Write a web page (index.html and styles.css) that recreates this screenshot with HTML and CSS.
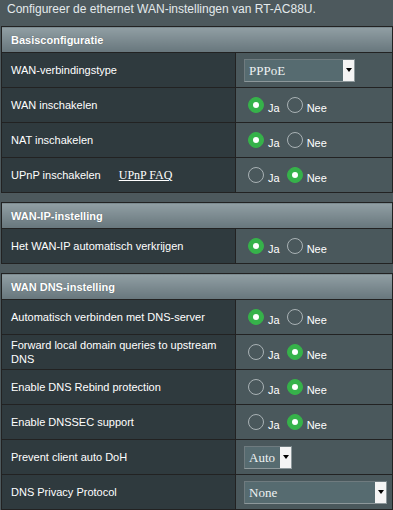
FILE: index.html
```html
<!DOCTYPE html>
<html lang="nl">
<head>
<meta charset="utf-8">
<title>WAN</title>
<link rel="stylesheet" href="styles.css">
</head>
<body>
<div class="page">
  <div class="intro">Configureer de ethernet WAN-instellingen van RT-AC88U.</div>

  <table class="form">
    <thead><tr><td colspan="2">Basisconfiguratie</td></tr></thead>
    <tbody>
      <tr><th>WAN-verbindingstype</th>
        <td><div class="sel sel-type"><span class="sel-val">PPPoE</span><span class="sel-arrow"></span></div></td></tr>
      <tr><th>WAN inschakelen</th>
        <td><div class="radios"><span class="radio on"></span><span class="rlabel">Ja</span><span class="radio"></span><span class="rlabel">Nee</span></div></td></tr>
      <tr><th>NAT inschakelen</th>
        <td><div class="radios"><span class="radio on"></span><span class="rlabel">Ja</span><span class="radio"></span><span class="rlabel">Nee</span></div></td></tr>
      <tr><th>UPnP inschakelen <a class="faq" href="#">UPnP FAQ</a></th>
        <td><div class="radios"><span class="radio"></span><span class="rlabel">Ja</span><span class="radio on"></span><span class="rlabel">Nee</span></div></td></tr>
    </tbody>
  </table>

  <table class="form">
    <thead><tr><td colspan="2">WAN-IP-instelling</td></tr></thead>
    <tbody>
      <tr><th>Het WAN-IP automatisch verkrijgen</th>
        <td><div class="radios"><span class="radio on"></span><span class="rlabel">Ja</span><span class="radio"></span><span class="rlabel">Nee</span></div></td></tr>
    </tbody>
  </table>

  <table class="form">
    <thead><tr><td colspan="2">WAN DNS-instelling</td></tr></thead>
    <tbody>
      <tr><th>Automatisch verbinden met DNS-server</th>
        <td><div class="radios"><span class="radio on"></span><span class="rlabel">Ja</span><span class="radio"></span><span class="rlabel">Nee</span></div></td></tr>
      <tr><th>Forward local domain queries to upstream DNS</th>
        <td><div class="radios"><span class="radio"></span><span class="rlabel">Ja</span><span class="radio on"></span><span class="rlabel">Nee</span></div></td></tr>
      <tr><th>Enable DNS Rebind protection</th>
        <td><div class="radios"><span class="radio"></span><span class="rlabel">Ja</span><span class="radio on"></span><span class="rlabel">Nee</span></div></td></tr>
      <tr><th>Enable DNSSEC support</th>
        <td><div class="radios"><span class="radio"></span><span class="rlabel">Ja</span><span class="radio on"></span><span class="rlabel">Nee</span></div></td></tr>
      <tr><th>Prevent client auto DoH</th>
        <td><div class="sel sel-auto"><span class="sel-val">Auto</span><span class="sel-arrow"></span></div></td></tr>
      <tr><th>DNS Privacy Protocol</th>
        <td><div class="sel sel-none"><span class="sel-val">None</span><span class="sel-arrow"></span></div></td></tr>
    </tbody>
  </table>
</div>
</body>
</html>
```
FILE: styles.css
```css
* { box-sizing: border-box; }
html, body { margin: 0; padding: 0; background: #4d595d; }
body {
  font-family: "Liberation Sans", Arial, sans-serif;
  font-size: 11px;
  color: #ffffff;
  width: 393px;
  height: 510px;
  overflow: hidden;
}
.page { padding-left: 1px; }
.intro {
  height: 26px;
  padding: 2px 0 0 6px;
  font-size: 12px;
  line-height: 14px;
  color: #e4eaec;
}
.form {
  border-collapse: collapse;
  width: 392px;
  border: 1px solid #222;
  margin-bottom: 9px;
}
.form thead td {
  height: 26px;
  padding: 0 0 0 9px;
  background: linear-gradient(#919fa4, #67767c);
  font-weight: bold;
  border-bottom: 1px solid #222;
  text-shadow: 0 0 1px rgba(40, 50, 55, 0.5);
}
.form th {
  width: 234px;
  height: 35px;
  padding: 0 10px 0 9px;
  background: #2f3a3e;
  text-align: left;
  font-weight: normal;
  line-height: 14px;
  border: 1px solid #222;
}
.form td {
  background: #4a585c;
  padding: 0 0 0 8px;
  border: 1px solid #222;
}
.faq {
  font-family: "Liberation Serif", "Times New Roman", serif;
  font-size: 12px;
  color: #ffffff;
  text-decoration: underline;
  margin-left: 15px;
}
.radios { display: flex; align-items: center; }
.radio {
  width: 16px;
  height: 16px;
  border-radius: 50%;
  border: 1px solid #a9b2b5;
  margin-left: 4px;
  display: flex;
  align-items: center;
  justify-content: center;
}
.radio.on { background: #36b24a; border-color: #36b24a; }
.radio.on::after {
  content: "";
  width: 6px;
  height: 6px;
  border-radius: 50%;
  background: #ffffff;
}
.rlabel { margin: 6px 3px 0 4px; }
.sel {
  display: flex;
  height: 23px;
  border: 1px solid #8d989b;
  border-top-color: #6f7b7f;
  border-left-color: #6f7b7f;
  background: #566b70;
  font-family: "Liberation Serif", "Times New Roman", serif;
  font-size: 13px;
  color: #eef2f3;
}
.sel-val { flex: 1; padding: 3px 0 0 4px; }
.sel-arrow {
  width: 11px;
  background: #f4f4f4;
  display: flex;
  align-items: center;
  justify-content: center;
}
.sel-arrow::after {
  content: "";
  border-left: 3px solid transparent;
  border-right: 3px solid transparent;
  border-top: 4px solid #000;
}
.sel-type { width: 111px; }
.sel-auto { width: 48px; }
.sel-none { width: 143px; }
```
